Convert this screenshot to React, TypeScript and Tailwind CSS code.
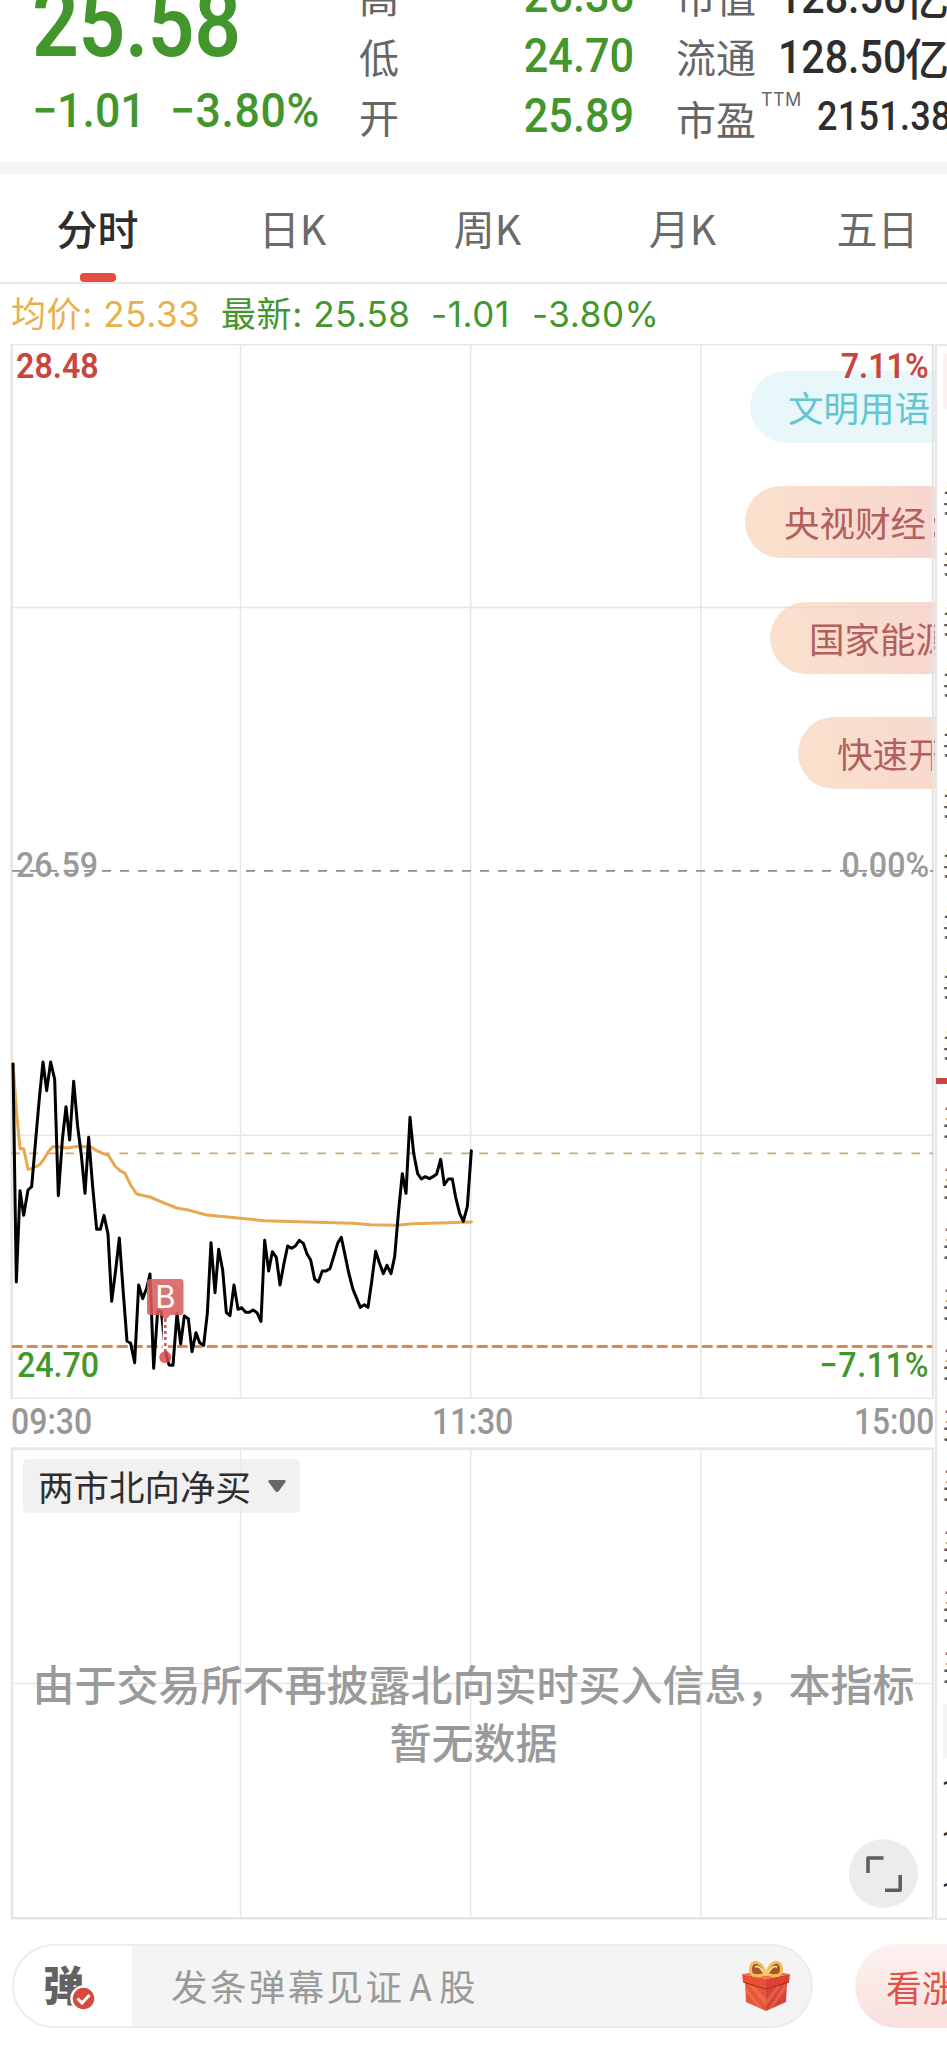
import React from "react";

const CJK = "font-['Noto_Sans_CJK_SC',sans-serif]";
const DIN = "font-[Roboto,sans-serif]";

const PRICE =
  "39,72 49,726 60,452 71,526 84,450 95,440 107,300 118,175 129,66 140,152 152,66 164,118 175,467 187,300 198,200 209,300 221,124 233,260 244,345 255,460 266,292 278,440 290,568 301,568 312,526 324,582 335,784 347,690 358,594 370,760 381,903 392,910 404,968 416,735 428,776 440,745 450,702 461,985 473,812 484,815 496,930 507,975 519,976 531,820 542,912 553,828 565,836 576,935 588,878 599,908 611,916 622,820 633,608 645,758 656,628 668,690 679,818 690,827 702,735 714,808 725,803 737,817 748,817 759,810 771,818 783,844 794,601 806,693 817,635 829,652 840,735 852,670 863,618 875,625 886,618 898,601 910,610 921,642 932,660 944,718 955,726 967,693 978,693 990,686 1001,650 1013,610 1024,592 1036,650 1047,702 1059,748 1081,802 1093,794 1104,802 1115,725 1127,634 1138,668 1150,701 1161,676 1173,701 1184,650 1196,510 1207,401 1218,460 1230,232 1241,340 1253,401 1264,417 1276,410 1288,416 1299,410 1310,402 1322,358 1333,434 1345,417 1357,417 1367,472 1379,520 1390,544 1402,500 1414,332";
const AVERAGE =
  "39,72 50,220 60,326 71,326 84,387 95,386 118,375 130,360 145,335 158,320 175,320 200,324 235,319 275,322 290,332 310,341 325,346 345,378 360,392 375,400 392,435 410,462 450,471 490,488 530,504 560,509 620,525 690,532 794,542 920,546 1060,550 1110,554 1190,556 1240,551 1414,546";

function Header() {
  return (
    <header className={`relative flex h-[162px] shrink-0 overflow-hidden ${CJK}`}>
      <div className={`w-[359px] shrink-0 pl-[32px] text-[#43962c] ${DIN}`}>
        <div className="-mt-[32px] h-[111px] origin-left scale-x-[0.855] text-[96px] leading-[111px] font-semibold tracking-[-0.5px]">25.58</div>
        <div className="mt-[4px] flex origin-left scale-x-[0.93] text-[48px] leading-[56px] font-medium whitespace-nowrap">
          <span className="w-[148px]">−1.01</span>
          <span className="tracking-[0.7px]">−3.80%</span>
        </div>
      </div>
      <div className="-mt-[34px] w-[120px] shrink-0 text-[40px] leading-[60px] text-[#666]">
        <div>高</div>
        <div>低</div>
        <div>开</div>
      </div>
      <div className={`-mt-[34px] w-[155px] shrink-0 origin-right scale-x-[0.9] text-right text-[48px] leading-[60px] font-medium text-[#43962c] ${DIN}`}>
        <div>26.36</div>
        <div>24.70</div>
        <div>25.89</div>
      </div>
      <div className="-mt-[34px] ml-[42px] w-[104px] shrink-0 text-[40px] leading-[60px] text-[#666]">
        <div>市值</div>
        <div>流通</div>
        <div className="flex translate-y-[2px] whitespace-nowrap">
          <span className="shrink-0">市盈</span>
          <span className="-mt-[18px] ml-[5px] font-[Inter,sans-serif] text-[18px] font-normal tracking-[0.4px]">TTM</span>
        </div>
      </div>
      <div className="-mt-[33px] w-[200px] shrink-0 text-[#2e2e2e]">
        {[0, 1].map((i) => (
          <div key={i} className="flex h-[60px] -translate-x-[2px] items-center whitespace-nowrap">
            <span className={`w-[127px] origin-left scale-x-[0.875] text-[47px] leading-[60px] font-medium ${DIN}`}>128.50</span>
            <span className="text-[44px] leading-[56px] font-medium">亿</span>
          </div>
        ))}
        <div className={`origin-left translate-x-[37px] scale-x-[0.9] text-[40px] leading-[60px] font-medium tracking-[0.3px] ${DIN}`}>2151.38</div>
      </div>
    </header>
  );
}

function Tabs() {
  return (
    <nav className={`flex h-[110px] shrink-0 border-b-2 border-[#e9e9e9] text-[41px] text-[#6a6a6a] ${CJK}`}>
      {["分时", "日K", "周K", "月K", "五日"].map((t, i) => (
        <div key={t} className="flex w-[195px] shrink-0 flex-col items-center">
          <span className={i === 0 ? "h-[99px] pt-[23px] leading-[60px] font-medium text-[#2e2e2e]" : "h-[99px] pt-[23px] leading-[60px] font-normal"}>{t}</span>
          {i === 0 && <span className="h-[9px] w-[36px] rounded-[4px] bg-[#e34c40]" />}
        </div>
      ))}
    </nav>
  );
}

function Legend() {
  return (
    <div className="flex h-[60px] shrink-0 items-center pl-[11px] font-[Inter,'Noto_Sans_CJK_SC',sans-serif] text-[35px] leading-[60px] tracking-[0.6px] whitespace-pre text-[#43962c]">
      <span className="w-[210px] text-[#e9b04e]">均价: 25.33</span>
      <span className="w-[210px]">最新: 25.58</span>
      <span className="w-[101px]">-1.01</span>
      <span>-3.80%</span>
    </div>
  );
}

const WARM = "absolute flex h-[72px] w-[300px] items-center rounded-full bg-linear-to-r from-[#fae1cc] to-[#f7cfd2] pl-[39px] whitespace-pre text-[#b2605b]";

function PriceChart() {
  return (
    <section className="relative h-[1055px] w-[935px] shrink-0 overflow-hidden">
      <div className={`text-[35.5px] ${CJK}`}>
        <div className="absolute top-[27px] left-[750px] flex h-[72px] w-[300px] items-center rounded-full bg-[#e8f7f9] pl-[38px] whitespace-pre text-[#62c6d2]">文明用语</div>
        <div className={`${WARM} top-[142px] left-[745px]`}>央视财经<span className="ml-[4px]">:</span></div>
        <div className={`${WARM} top-[258px] left-[770px]`}>国家能源</div>
        <div className={`${WARM} top-[373px] left-[798px]`}>快速开户</div>
      </div>
      <svg className="absolute inset-0" width="935" height="1055" viewBox="0 344 935 1055" fill="none">
        <g stroke="#d9d9d9" strokeOpacity=".65" strokeWidth="1.4">
          <path d="M240.5 344V1398M470.7 344V1398M700.8 344V1398M12 607.5H933M12 1135.3H933M11 344.8H934M11 1398.2H934" />
        </g>
        <path d="M11.7 344V1399M933 344V1399" stroke="#e5e5e5" strokeWidth="2.4" />
        <path d="M12 870.8H933" stroke="#8f8f8f" strokeWidth="1.8" strokeDasharray="9 9" />
        <path d="M11.3 1153.4H933" stroke="#d0a976" strokeWidth="1.6" strokeDasharray="8.5 9.5" />
        <path d="M13 1346.4H931" stroke="#da8a50" strokeWidth="3" strokeLinecap="round" strokeDasharray="8.5 6.5" />
        <g transform="translate(0 1040) scale(.33333)" strokeLinejoin="round" strokeLinecap="round">
          <polyline points={AVERAGE} stroke="#e8a850" strokeWidth="9" />
          <polyline points={PRICE} stroke="#000" strokeWidth="9" />
        </g>
        <path d="M165.3 1318V1351" stroke="#fff" strokeWidth="5" />
        <path d="M165.3 1319V1352" stroke="#d95555" strokeWidth="2.6" strokeDasharray="3 3" />
        <circle cx="165.3" cy="1357.3" r="6" fill="#db4a4a" fillOpacity=".85" />
        <path d="M150 1279h30.500a3 3 0 0 1 3 3v30a3 3 0 0 1-3 3h-10l-5 5-5-5h-10.500a3 3 0 0 1-3-3v-30a3 3 0 0 1 3-3z" fill="#da5f5f" fillOpacity=".88" />
      </svg>
      <span className="absolute top-[935px] left-[147px] w-[37px] text-center font-[Inter,sans-serif] text-[31px] leading-[36px] text-white">B</span>
      <div className={`text-[35px] leading-[42px] ${DIN}`}>
        <span className="absolute top-[2px] left-[16px] origin-left scale-x-[0.92] font-semibold text-[#c9453e]">28.48</span>
        <span className="absolute top-[2px] right-[6px] origin-right scale-x-[0.92] font-semibold text-[#c9453e]">7.11%</span>
        <span className="absolute top-[501px] left-[16px] origin-left scale-x-[0.92] font-medium text-[#9a9a9a]">26.59</span>
        <span className="absolute top-[501px] right-[6px] origin-right scale-x-[0.92] font-medium text-[#9a9a9a]">0.00%</span>
        <span className="absolute top-[1001px] left-[17px] origin-left scale-x-[0.92] font-medium text-[#43962c]">24.70</span>
        <span className="absolute top-[1001px] right-[6px] origin-right scale-x-[0.92] font-medium tracking-[0.7px] text-[#43962c]">−7.11%</span>
      </div>
    </section>
  );
}

function TimeAxis() {
  return (
    <div className={`flex h-[48px] w-[935px] shrink-0 justify-between pt-[2px] pr-[1px] pl-[11px] text-[36px] leading-[42px] font-medium text-[#979797] ${DIN}`}>
      <span className="origin-left scale-x-[0.89]">09:30</span>
      <span className="scale-x-[0.89]">11:30</span>
      <span className="origin-right scale-x-[0.88]">15:00</span>
    </div>
  );
}

function FlowChart() {
  return (
    <section className={`relative flex h-[473px] w-[935px] shrink-0 flex-col pt-[12px] pl-[23px] ${CJK}`}>
      <svg className="absolute inset-0" width="935" height="473" viewBox="0 1447 935 473" fill="none">
        <path d="M240.5 1448V1918M470.7 1448V1918M700.8 1448V1918M12 1683.500H933" stroke="#d9d9d9" strokeOpacity=".65" strokeWidth="1.4" />
        <path d="M11.9 1448.600H933V1918.300H11.9Z" stroke="#e7e7e7" strokeWidth="2.600" />
      </svg>
      <div className="relative flex h-[54px] w-[277px] items-center rounded-[5px] bg-[#ededed]/80 pl-[15px] text-[35.5px] whitespace-nowrap text-[#2e2e2e]">
        两市北向净买
        <svg className="ml-[17px]" width="18" height="13" viewBox="0 0 18 13"><path d="M1.500 0h15q2 .5 .8 2.300l-6.500 8.700q-1.800 2-3.600 0L.7 2.300Q-.5.5 1.500 0z" fill="#666" /></svg>
      </div>
      <p className="relative mt-[141px] -mr-[6px] -ml-[17px] text-center text-[42px] leading-[58px] font-medium text-[#9a9a9a]">
        由于交易所不再披露北向实时买入信息，本指标
        <br />
        暂无数据
      </p>
      <button className="absolute top-[392px] left-[849px] flex size-[69px] items-center justify-center rounded-full bg-[#ececec]">
        <svg width="36" height="36" viewBox="0 0 36 36" fill="none" stroke="#5e5e5e" strokeWidth="3.600" strokeLinejoin="round">
          <path d="M2 17V2H17.500M34.200 19V34.200H19" />
        </svg>
      </button>
    </section>
  );
}

function OrderBook() {
  return (
    <aside className={`flex h-[1576px] w-[60px] shrink-0 flex-col border-2 border-[#e7e7e7] pl-[6px] text-[35px] text-[#555] ${CJK}`}>
      <div className="mt-[7px] h-[57px] w-[60px] shrink-0 rounded-[6px] bg-[#fdf0f0]" />
      <div className="mt-[57px] -ml-[1px]">
        {[10, 9, 8, 7, 6, 5, 4, 3, 2, 1].map((n) => (
          <div key={n} className="h-[60.5px] leading-[60.5px] whitespace-nowrap">卖{n}</div>
        ))}
      </div>
      <div className="mt-[6px] -ml-[7px] h-[6px] w-[60px] shrink-0 bg-[#cc4540]" />
      <div className="mt-[6px] -ml-[1px]">
        {[1, 2, 3, 4, 5, 6, 7, 8, 9, 10].map((n) => (
          <div key={n} className="h-[60.5px] leading-[60.5px] whitespace-nowrap">买{n}</div>
        ))}
      </div>
      <div className="mt-[9px] h-[54px] w-[60px] shrink-0 bg-[#f4f4f4]" />
      <div className={`mt-[8px] text-[34px] text-[#2e2e2e] ${DIN}`}>
        {["11:29", "11:29", "11:30"].map((t, i) => (
          <div key={i} className="-ml-[2px] h-[51px] leading-[51px]">{t}</div>
        ))}
      </div>
    </aside>
  );
}

function Gift() {
  return (
    <svg width="50" height="52" viewBox="0 0 50 52">
      <path d="M4 22L25 29V51L5 42z" fill="#e5573a" />
      <path d="M46 22L25 29V51L45 42z" fill="#d8413a" />
      <path d="M5 33l12 14 5 2L5 27zM13 26l12 13v7L8 25zM45 29L31 48l-4 2 17-27zM36 26L25 40v6l15-20z" fill="#ef8050" opacity=".5" />
      <path d="M1 14L25 19V29L2 22z" fill="#ea5238" />
      <path d="M49 14L25 19V29L48 22z" fill="#dc412f" />
      <path d="M1 14L14 12H37L49 14 25 19z" fill="#f27052" />
      <path d="M2 22L25 29 48 22" fill="none" stroke="#9c2c22" strokeWidth="1" />
      <g fill="#a8582b" stroke="#f3bd51" strokeWidth="3">
        <path d="M24 13C21 3 15 0 11 4 8 9 10 14 12 15 16 16 21 16 24 13z" />
        <path d="M26 13C29 3 35 0 39 4 42 9 40 14 38 15 34 16 29 16 26 13z" />
      </g>
      <path d="M14 7q4-2 8 5M36 7q-4-2-8 5" fill="none" stroke="#fff1b8" strokeWidth="1.500" />
      <rect x="22" y="10" width="6" height="6" rx="2" fill="#f8cc64" />
    </svg>
  );
}

function BottomBar() {
  return (
    <footer className={`flex h-[84px] shrink-0 pl-[12px] ${CJK}`}>
      <div className="flex w-[801px] shrink-0 items-center overflow-hidden rounded-full border-[2.5px] border-[#ececec] bg-[#f4f4f4]">
        <div className="relative h-full w-[118px] shrink-0 bg-white">
          <span className="absolute top-[12px] left-[29px] text-[41px] leading-[50px] font-black text-[#626262]">弹</span>
          <svg className="absolute top-[39px] left-[56px]" width="27" height="27" viewBox="0 0 27 27" fill="none">
            <circle cx="13.500" cy="13.500" r="12" fill="#d9483d" stroke="#fff" strokeWidth="2.500" />
            <path d="M7.500 13.500l4.500 4.500 7.500-8" stroke="#fff" strokeWidth="3" />
          </svg>
        </div>
        <div className="ml-[39px] flex flex-1 text-[36.5px] font-normal tracking-[2.400px] whitespace-nowrap text-[#9a9a9a]">
          发条弹幕见证
          <span className="mr-[5px] ml-[5px]">A</span>
          <span>股</span>
        </div>
        <div className="mr-[20px]">
          <Gift />
        </div>
      </div>
      <div className="ml-[42px] flex w-[200px] shrink-0 items-center rounded-full bg-linear-to-b from-[#fdf2f1] to-[#f8e0dd] pl-[31px] text-[36px] whitespace-nowrap text-[#de5449]">看涨</div>
    </footer>
  );
}

export default function App() {
  return (
    <div className="flex h-[2052px] w-[947px] flex-col overflow-hidden bg-white">
      <Header />
      <div className="h-[12px] shrink-0 bg-[#f3f3f3]" />
      <Tabs />
      <Legend />
      <main className="flex h-[1600px] shrink-0 overflow-hidden">
        <div className="flex w-[935px] shrink-0 flex-col">
          <PriceChart />
          <TimeAxis />
          <FlowChart />
        </div>
        <OrderBook />
      </main>
      <BottomBar />
    </div>
  );
}
